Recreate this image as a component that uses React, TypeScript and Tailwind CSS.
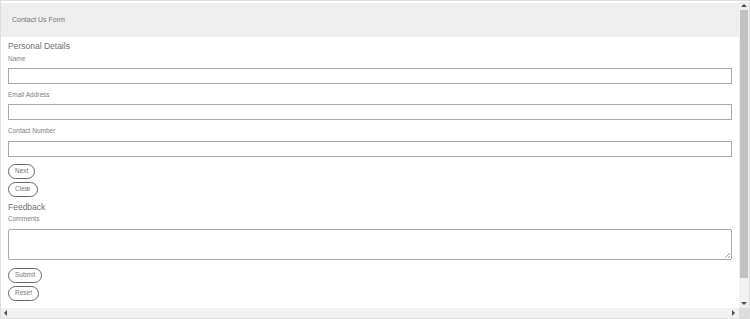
import React from 'react'

const font = { fontFamily: '"Liberation Sans", Arial, sans-serif' }

function Label({ children, className = '' }: { children: React.ReactNode; className?: string }) {
  return <div className={`text-[6.5px] leading-[9px] text-[#808080] ${className}`}>{children}</div>
}

function Field({ className = '' }: { className?: string }) {
  return <div className={`h-[16px] border border-[#a9a9a9] bg-white ${className}`} />
}

function Pill({ children, className = '' }: { children: React.ReactNode; className?: string }) {
  return (
    <div className={`flex ${className}`}>
      <button className="h-[15px] px-[6px] rounded-full border border-[#666] bg-white text-[6.5px] leading-none text-[#777]">
        {children}
      </button>
    </div>
  )
}

function Arrow({ dir }: { dir: 'up' | 'down' | 'left' | 'right' }) {
  const pts = {
    up: '1,5 4,2 7,5',
    down: '1,2 4,5 7,2',
    left: '5,1 2,4 5,7',
    right: '2,1 5,4 2,7',
  }[dir]
  return (
    <svg width="8" height="8" viewBox="0 0 8 8">
      <polygon points={pts} fill="#505050" />
    </svg>
  )
}

export default function App() {
  return (
    <div className="w-[750px] h-[319px] bg-white" style={font}>
      <div className="flex flex-col w-full h-full border border-[#dedede] pt-[1px]">
        <div className="flex flex-1 min-h-0">
          {/* Page */}
          <div className="flex-1 min-w-0 overflow-hidden">
            <div className="h-[34px] mt-[1px] bg-[#eeeeee] flex items-center px-[11px]">
              <span className="text-[7px] text-[#777]">Contact Us Form</span>
            </div>

            <div className="pl-[7px] pr-[7px]">
              <div className="mt-[3px] text-[8.5px] leading-[12px] text-[#707070]">Personal Details</div>
              <Label className="mt-[2px]">Name</Label>
              <Field className="mt-[5px]" />
              <Label className="mt-[6px]">Email Address</Label>
              <Field className="mt-[5px]" />
              <Label className="mt-[6px]">Contact Number</Label>
              <Field className="mt-[6px]" />
              <Pill className="mt-[7px]">Next</Pill>
              <Pill className="mt-[3px]">Clear</Pill>

              <div className="mt-[4px] text-[8.5px] leading-[12px] text-[#707070]">Feedback</div>
              <Label className="mt-[1px]">Comments</Label>
              <div className="relative mt-[6px] h-[31px] border border-[#a9a9a9] rounded-[2px] bg-white">
                <svg className="absolute right-[1px] bottom-[1px]" width="6" height="6" viewBox="0 0 6 6">
                  <path d="M6 1 L1 6 M6 4 L4 6" stroke="#888" strokeWidth="0.8" />
                </svg>
              </div>
              <Pill className="mt-[8px]">Submit</Pill>
              <Pill className="mt-[3px]">Reset</Pill>
            </div>
          </div>

          {/* Vertical scrollbar */}
          <div className="w-[10px] bg-[#f1f1f1] flex flex-col items-center">
            <div className="h-[8px] flex items-center justify-center"><Arrow dir="up" /></div>
            <div className="w-[8px] h-[268px] bg-[#c1c1c1]" />
            <div className="flex-1" />
            <div className="h-[8px] flex items-center justify-center"><Arrow dir="down" /></div>
          </div>
        </div>

        {/* Horizontal scrollbar */}
        <div className="h-[10px] flex">
          <div className="flex-1 bg-[#f1f1f1] flex items-center justify-between px-[1px]">
            <Arrow dir="left" />
            <Arrow dir="right" />
          </div>
          <div className="w-[10px] bg-[#dcdcdc]" />
        </div>
      </div>
    </div>
  )
}
